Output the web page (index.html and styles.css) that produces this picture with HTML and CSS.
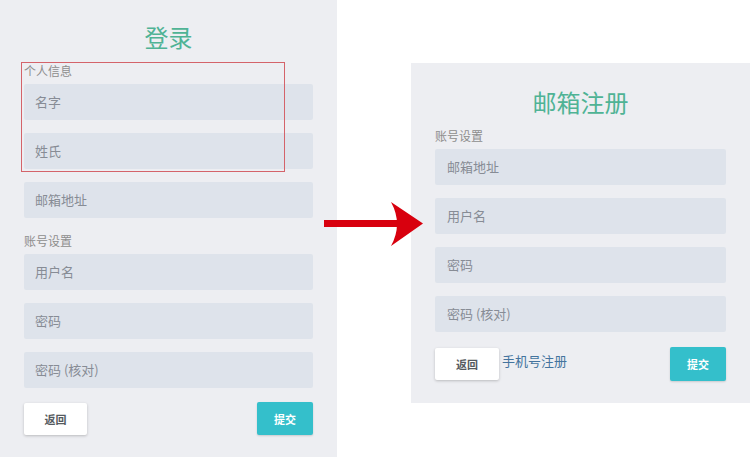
FILE: index.html
```html
<!DOCTYPE html>
<html lang="zh">
<head>
<meta charset="utf-8">
<link rel="stylesheet" href="styles.css">
</head>
<body>
<div class="canvas">
  <section class="panel panel-left">
    <h1 class="title">登录</h1>
    <div class="label">个人信息</div>
    <div class="input first">名字</div>
    <div class="input">姓氏</div>
    <div class="input">邮箱地址</div>
    <div class="label section">账号设置</div>
    <div class="input first">用户名</div>
    <div class="input">密码</div>
    <div class="input">密码 (核对)</div>
    <div class="actions">
      <button class="btn btn-back">返回</button>
      <button class="btn btn-submit">提交</button>
    </div>
    <div class="highlight"></div>
  </section>

  <section class="panel panel-right">
    <h1 class="title">邮箱注册</h1>
    <div class="label">账号设置</div>
    <div class="input first">邮箱地址</div>
    <div class="input">用户名</div>
    <div class="input">密码</div>
    <div class="input">密码 (核对)</div>
    <div class="actions">
      <button class="btn btn-back">返回</button>
      <a class="link">手机号注册</a>
      <button class="btn btn-submit push">提交</button>
    </div>
  </section>

  <svg class="arrow" width="110" height="56" viewBox="318 196 110 56">
    <rect x="324" y="220" width="74" height="7" fill="#d8000e"/>
    <path d="M391 202 L423 223.5 L391 246 Q403 224 391 202 Z" fill="#d8000e"/>
  </svg>
</div>
</body>
</html>
```

FILE: styles.css
```css
* { box-sizing: border-box; }
html, body { margin: 0; padding: 0; background: #ffffff; }
body {
  font-family: "Noto Sans CJK SC", "Liberation Sans", sans-serif;
  width: 750px;
  height: 463px;
  overflow: hidden;
}
.canvas {
  position: relative;
  display: flex;
  align-items: flex-start;
  gap: 74px;
  width: 750px;
  height: 463px;
}
.panel {
  background: #edeef2;
  display: flex;
  flex-direction: column;
  padding: 0 24px 22px 24px;
}
.panel-left {
  position: relative;
  width: 337px;
  height: 457px;
  padding-top: 1px;
}
.panel-right {
  width: 339px;
  margin-top: 63px;
  height: 340px;
  padding-top: 3px;
}
.title {
  margin: 0;
  font-weight: 400;
  font-size: 24px;
  line-height: 30px;
  color: #4fb395;
  text-align: center;
  padding-top: 21px;
  height: 62px;
}
.label {
  font-size: 12px;
  line-height: 16px;
  color: #8d8d8d;
  margin-bottom: 5px;
}
.label.section { margin-top: 15px; }
.input {
  height: 36px;
  background: #dee3eb;
  border-radius: 2px;
  font-size: 13px;
  line-height: 36px;
  color: #878c95;
  padding-left: 11px;
  margin-top: 13px;
}
.input.first { margin-top: 0; }
.panel-right .input { padding-left: 12px; }
.actions {
  display: flex;
  align-items: center;
  margin-top: 14px;
}
.panel-right .actions { margin-top: 15px; }
.btn {
  font-family: "Noto Sans CJK SC", "Liberation Sans", sans-serif;
  border: none;
  border-radius: 2px;
  font-size: 11px;
  font-weight: 700;
  cursor: pointer;
  padding: 0;
}
.btn-back {
  width: 63px;
  height: 32px;
  background: #ffffff;
  color: #555a60;
  box-shadow: 0 1px 3px rgba(0, 0, 0, 0.22);
}
.panel-right .btn-back { width: 64px; }
.btn-submit {
  width: 56px;
  height: 33px;
  background: #34bfcb;
  color: #ffffff;
  margin-left: auto;
  box-shadow: 0 1px 2px rgba(0, 0, 0, 0.15);
}
.panel-right .btn-submit { height: 34px; }
.link {
  font-size: 13px;
  color: #44749e;
  margin-left: 3px;
  align-self: flex-start;
  line-height: 28px;
}
.highlight {
  position: absolute;
  left: 21px;
  top: 62px;
  width: 264px;
  height: 110px;
  border: 1px solid #d4636a;
  pointer-events: none;
}
.arrow {
  position: absolute;
  left: 318px;
  top: 196px;
}
```
